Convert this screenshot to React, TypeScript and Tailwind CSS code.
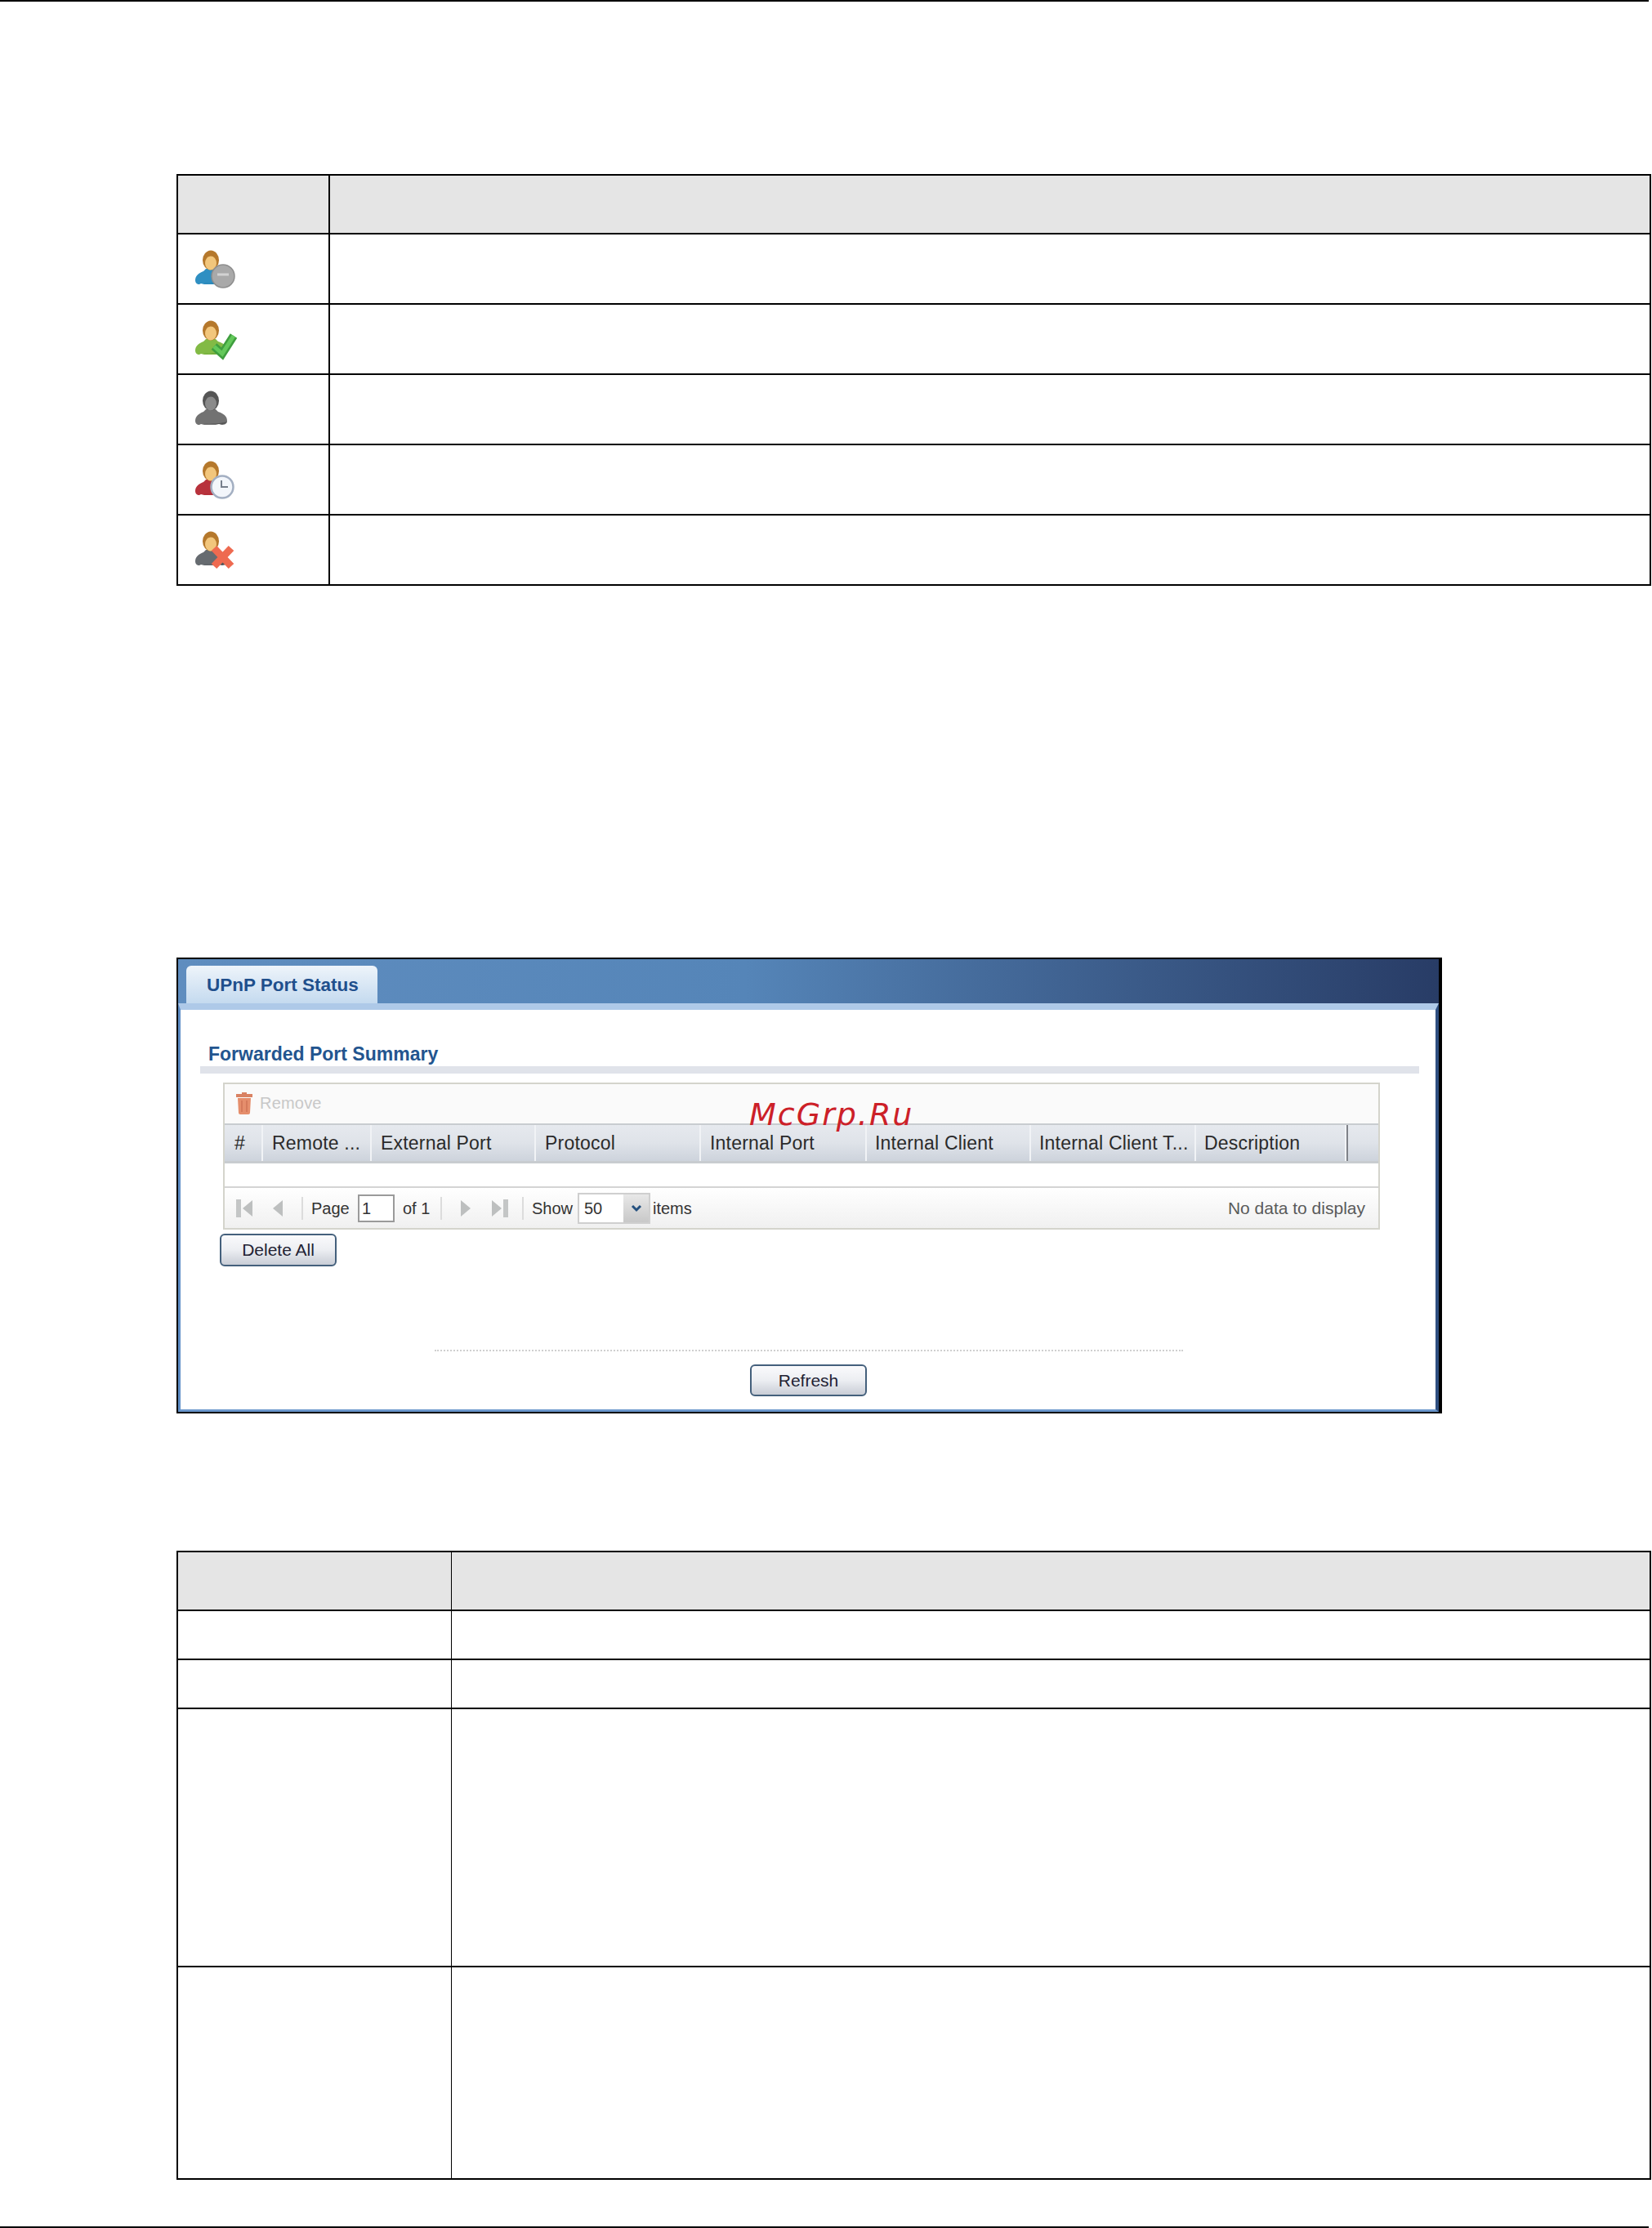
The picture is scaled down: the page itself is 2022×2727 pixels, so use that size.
import type { ReactNode } from "react";

const font = "font-['Liberation_Sans',Arial,sans-serif]";

function Person({ body, shade, hair = "#b5782c", face = "#f2c67c", children }: { body: string; shade: string; hair?: string; face?: string; children?: ReactNode }) {
  return (
    <svg width="56" height="50" viewBox="0 0 56 50" className="ml-[17px] mt-[19px] block">
      <path d="M4 37c0-6 5-9 10-11l3-3h12l3 3c6 2 11 5 11 11 0 4-3 5-7 5l-3-1-4 1H15l-4-1-2 1c-3 0-5-2-5-5z" fill={body} />
      <path d="M6 41h32c2 0 4-1 5-3-9 3-26 3-37 3z" fill={shade} />
      <ellipse cx="23" cy="12.5" rx="10" ry="12" fill={hair} />
      <ellipse cx="23" cy="16" rx="7" ry="8.5" fill={face} />
      {children}
    </svg>
  );
}

const icons = [
  <Person key="a" body="#2f8fc2" shade="#1d6c99">
    <circle cx="38" cy="32" r="14" fill="#a9a9a9" stroke="#8e8e8e" strokeWidth="1.5" />
    <path d="M31 30h14" stroke="#d2d2d2" strokeWidth="3" />
  </Person>,
  <Person key="b" body="#82ba45" shade="#4f8f2c">
    <path d="M27 32l10 9 14-22" fill="none" stroke="#3f9e3e" strokeWidth="10" />
    <path d="M27 32l10 9 14-22" fill="none" stroke="#63c85a" strokeWidth="5" />
  </Person>,
  <Person key="c" body="#727272" shade="#555555" hair="#555555" face="#8a8a8a" />,
  <Person key="d" body="#b8323c" shade="#8c2029">
    <circle cx="37" cy="32" r="13.5" fill="#f3f6fb" stroke="#a3afc2" strokeWidth="2.5" />
    <path d="M36 24v8h8" fill="none" stroke="#777f8c" strokeWidth="2" />
  </Person>,
  <Person key="e" body="#666b70" shade="#4c4f53">
    <path d="M27 21l21 22M48 21L27 43" stroke="#ee6a50" strokeWidth="9" />
  </Person>,
];

function Trash() {
  return (
    <svg width="22" height="27" viewBox="0 0 22 27" className="block">
      <path d="M8 0h6v2h7v4H1V2h7z" fill="#d98263" />
      <path d="M3 7h16l-1 18c0 1-1 2-2 2H6c-1 0-2-1-2-2z" fill="#e58e6c" />
      <path d="M8 10v14M14 10v14" stroke="#cf7455" strokeWidth="1.5" />
    </svg>
  );
}

function Nav({ dir, bar }: { dir: "left" | "right"; bar?: boolean }) {
  const w = bar ? 20 : 13;
  const tri = dir === "left"
    ? `M${w} 1v20L${w - 12} 11z`
    : "M0 1v20L12 11z";
  return (
    <svg width={w} height="22" viewBox={`0 0 ${w} 22`} className="block">
      <path d={tri} fill="#bdbfbf" />
      {bar && <rect x={dir === "left" ? 0 : 14} y="0" width="6" height="22" fill="#c4c6c6" />}
    </svg>
  );
}

const columns = [
  { label: "#", w: "w-[47px]", pl: "pl-[12px]" },
  { label: "Remote ...", w: "w-[133px]", pl: "pl-[11px]" },
  { label: "External Port", w: "w-[201px]", pl: "pl-[11px]" },
  { label: "Protocol", w: "w-[202px]", pl: "pl-[11px]" },
  { label: "Internal Port", w: "w-[203px]", pl: "pl-[11px]" },
  { label: "Internal Client", w: "w-[201px]", pl: "pl-[10px]" },
  { label: "Internal Client T...", w: "w-[202px]", pl: "pl-[10px]" },
  { label: "Description", w: "w-[184px]", pl: "pl-[10px]" },
];

function Button({ children, className }: { children: ReactNode; className: string }) {
  return (
    <div className={`flex items-center justify-center rounded-[6px] border-2 border-[#44607c] bg-gradient-to-b from-[#fafafc] via-[#eceef2] to-[#c9cdd6] text-[21px] text-[#222233] ${className}`}>
      {children}
    </div>
  );
}

function Sep({ ml }: { ml: string }) {
  return <div className={`h-[28px] w-[2px] bg-[#dcdcdc] ${ml}`} />;
}

export default function App() {
  return (
    <div className={`relative flex h-[2727px] w-[2022px] flex-col overflow-hidden bg-white ${font}`}>
      <div className="h-[2px] w-[2018px] bg-black" />

      <div className="ml-[216px] mt-[211px] w-[1805px] border-2 border-b-0 border-black">
        <div className="flex h-[72px] border-b-2 border-black bg-[#e5e5e5]">
          <div className="h-full w-[186px] border-r-2 border-black" />
        </div>
        {icons.map((icon, i) => (
          <div key={i} className="flex h-[86px] border-b-2 border-black">
            <div className="h-full w-[186px] border-r-2 border-black">{icon}</div>
          </div>
        ))}
      </div>

      {/* UPnP port status window */}
      <div className="ml-[216px] mt-[455px] flex h-[558px] w-[1549px] flex-col border-2 border-r-[4px] border-black bg-gradient-to-r from-[#5f8dbf] via-[#5585b8] via-[45%] to-[#283c66]">
        <div className="h-[54px] pl-[10px] pt-[8px]">
          <div className="flex h-[46px] w-[234px] items-center rounded-t-[6px] bg-gradient-to-b from-[#eef4fa] to-[#c4daef] pl-[25px] pt-[2px] text-[22.5px] font-bold text-[#1f4f8c]">
            UPnP Port Status
          </div>
        </div>
        <div className="flex min-h-0 flex-1 flex-col border-b-[3px] border-l-[3px] border-r-[4px] border-t-[8px] border-b-[#6b97cc] border-l-[#5f8ec6] border-r-[#2f4f80] border-t-[#aec9e8] bg-white">
          <div className="ml-[24px] mt-[39px] w-[1492px]">
            <div className="h-[30px] pl-[10px] text-[23px] font-bold leading-[30px] text-[#23558f]">Forwarded Port Summary</div>
            <div className="h-[9px] bg-[#e0e3ea]" />
          </div>

          <div className="ml-[52px] mt-[11px] w-[1416px] border-2 border-[#d4d4cc] text-[23px] tracking-[0.2px]">
            <div className="flex h-[48px] items-center gap-[8px] bg-[#fafafa] pb-[2px] pl-[13px] text-[#c8c8c8]">
              <Trash />
              <span className="text-[20px]">Remove</span>
            </div>
            <div className="flex h-[49px] border-y-2 border-b-[3px] border-[#c8ccd0] bg-gradient-to-b from-[#e6e9ee] via-[#dfe3e9] to-[#cdd3dc] text-[#2b2b2b]">
              {columns.map((c) => (
                <div key={c.label} className={`flex items-center whitespace-nowrap border-r-2 border-[#f1f3f6] ${c.w} ${c.pl}`}>
                  {c.label}
                </div>
              ))}
              <div className="w-[2px] bg-[#7f8288]" />
            </div>
            <div className="h-[28px] bg-white" />
            <div className="flex h-[51px] items-center border-t-2 border-[#d4d4d4] bg-gradient-to-b from-[#ffffff] to-[#f0f0f0] text-[20px] tracking-normal text-[#333333]">
              <div className="ml-[14px]"><Nav dir="left" bar /></div>
              <div className="ml-[24px]"><Nav dir="left" /></div>
              <Sep ml="ml-[23px]" />
              <span className="ml-[10px] w-[47px]">Page</span>
              <div className="ml-[10px] flex h-[34px] w-[45px] items-center border-2 border-[#9a9a9a] bg-white pl-[3px]">1</div>
              <span className="ml-[10px] w-[37px]">of 1</span>
              <Sep ml="ml-[9px]" />
              <div className="ml-[23px]"><Nav dir="right" /></div>
              <div className="ml-[25px]"><Nav dir="right" bar /></div>
              <Sep ml="ml-[17px]" />
              <span className="ml-[10px] w-[49px]">Show</span>
              <div className="ml-[7px] flex h-[38px] w-[89px] border-2 border-[#cfcfcf] bg-white">
                <div className="flex w-[54px] items-center pl-[6px]">50</div>
                <div className="flex flex-1 items-center justify-center bg-gradient-to-b from-[#e8e8e8] to-[#c8c8c8]">
                  <svg width="14" height="10" viewBox="0 0 14 10"><path d="M2 2l5 5 5-5" fill="none" stroke="#24507f" strokeWidth="3" /></svg>
                </div>
              </div>
              <span className="ml-[3px]">items</span>
              <span className="ml-auto mr-[16px] text-[21px] text-[#5a5a5a]">No data to display</span>
            </div>
          </div>

          <Button className="ml-[48px] mt-[5px] h-[40px] w-[143px]">Delete All</Button>
          <div className="ml-[311px] mt-[102px] w-[916px] border-t-2 border-dotted border-[#cfcfcf]" />
          <Button className="ml-[697px] mt-[16px] h-[39px] w-[143px]">Refresh</Button>
        </div>
      </div>

      <div className="ml-[216px] mt-[168px] w-[1805px] border-2 border-b-0 border-black">
        <div className="flex h-[72px] border-b-2 border-black bg-[#e5e5e5]">
          <div className="h-full w-[335px] border-r border-black" />
        </div>
        <div className="flex h-[60px] border-b-2 border-black">
          <div className="h-full w-[335px] border-r border-black" />
        </div>
        <div className="flex h-[60px] border-b-2 border-black">
          <div className="h-full w-[335px] border-r border-black" />
        </div>
        <div className="flex h-[316px] border-b-2 border-black">
          <div className="h-full w-[335px] border-r border-black" />
        </div>
        <div className="flex h-[260px] border-b-2 border-black">
          <div className="h-full w-[335px] border-r border-black" />
        </div>
      </div>

      <div className="mt-[57px] h-[2px] w-[2018px] bg-black" />

      <div className="absolute left-[917px] top-[1336px] whitespace-nowrap font-['DejaVu_Sans',sans-serif] text-[38px] italic tracking-[2px] text-[#cc2028]">
        McGrp.Ru
      </div>
    </div>
  );
}
